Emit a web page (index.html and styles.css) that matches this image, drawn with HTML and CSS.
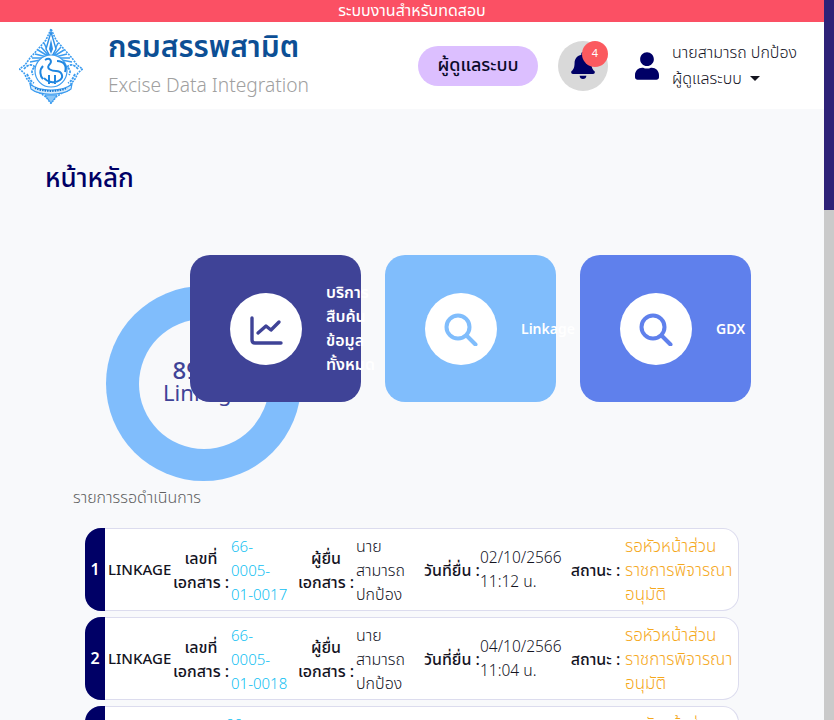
FILE: index.html
```html
<!DOCTYPE html>
<html lang="en">
<head>
    <meta charset="UTF-8">
    <meta name="viewport" content="width=device-width, initial-scale=1.0">
    <title>Excise Data Integration</title>
    <link rel="stylesheet" href="styles.css">
</head>
<body>

    <div class="page">
        <div class="test-banner">ระบบงานสำหรับทดสอบ</div>

        <header class="topbar">
            <div class="brand">
                <svg class="logo" viewBox="0 0 64 76" fill="none" stroke="#3b9cf0" stroke-width="1">
                    <path d="M32 1L27 12L20 20L11 30L6 37L0.5 41L5 45L8 51L13 57L14 62L21 65L27 69L32 75.5L37 69L43 65L50 62L51 57L56 51L59 45L63.5 41L58 37L53 30L44 20L37 12Z" stroke-dasharray="2 1" stroke-width="1.6"/>
                    <path d="M32 30L25 15M32 30L22 19M32 30L19 22M32 30L16 26M32 30L13 30M32 30L11 34M32 30L39 15M32 30L42 19M32 30L45 22M32 30L48 26M32 30L51 30M32 30L53 34" stroke-width="1.5"/>
                    <path d="M32 4L27 21L32 30L37 21Z" fill="#fff" stroke="#2f8fe6" stroke-width="1.4"/>
                    <path d="M32 11L30 21L32 26L34 21Z" fill="#2f8fe6" stroke="none"/>
                    <path d="M5 41C9 36 13 36 16 39C13 41 12 44 14 47M59 41C55 36 51 36 48 39C51 41 52 44 50 47M8 46C10 50 11 53 15 55M56 46C54 50 53 53 49 55" stroke-width="1.8" stroke-dasharray="2.5 1"/>
                    <circle cx="32" cy="43" r="16" fill="#fff" stroke-width="1.2"/>
                    <path d="M26 32C31 29 34 33 30 37C27 41 33 43 37 43C43 43 45 49 41 52C36 56 28 54 25 50M38 33C45 33 48 38 46 44M24 38C20 42 21 48 24 51M30 47V56M36 47V56" stroke="#1f86e0" stroke-width="2"/>
                    <path d="M11 56C20 64 44 64 53 56L52 61C43 68 21 68 12 61Z" fill="#d8ecfc" stroke-width="1.2"/>
                    <path d="M16 60C24 64 40 64 48 60" stroke="#1678d2" stroke-width="1.8" stroke-dasharray="1.5 1"/>
                    <path d="M26 67H38L32 75Z" fill="#8cc6f6" stroke-width="1"/>
                </svg>
                <div class="brand-text">
                    <div class="brand-name">กรมสรรพสามิต</div>
                    <div class="brand-sub">Excise Data Integration</div>
                </div>
            </div>
            <div class="topbar-right">
                <div class="role-pill">ผู้ดูแลระบบ</div>
                <div class="bell">
                    <svg class="bell-icon" viewBox="0 0 448 512"><path d="M224 512c35.32 0 63.97-28.65 63.97-64H160.03c0 35.35 28.65 64 63.97 64zm215.39-149.71c-19.32-20.76-55.47-51.99-55.47-154.29 0-77.7-54.48-139.9-127.94-155.16V32c0-17.67-14.32-32-31.98-32s-31.98 14.33-31.98 32v20.84C118.56 68.1 64.08 130.3 64.08 208c0 102.3-36.15 133.53-55.47 154.29-6 6.45-8.66 14.16-8.61 21.71.11 16.4 12.98 32 32.1 32h383.8c19.12 0 32-15.6 32.1-32 .05-7.55-2.61-15.27-8.61-21.71z"/></svg>
                    <span class="bell-count">4</span>
                </div>
                <div class="user">
                    <svg class="user-icon" viewBox="0 0 448 512"><path d="M224 256c70.7 0 128-57.3 128-128S294.7 0 224 0 96 57.3 96 128s57.3 128 128 128zm89.6 32h-16.7c-22.2 10.2-46.9 16-72.9 16s-50.6-5.8-72.9-16h-16.7C60.2 288 0 348.2 0 422.4V464c0 26.5 21.5 48 48 48h352c26.5 0 48-21.5 48-48v-41.6c0-74.2-60.2-134.4-134.4-134.4z"/></svg>
                    <div class="user-text">
                        <div>นายสามารถ ปกป้อง</div>
                        <div>ผู้ดูแลระบบ <span class="caret"></span></div>
                    </div>
                </div>
            </div>
        </header>

        <main class="content">
            <h1 class="page-title">หน้าหลัก</h1>

            <div class="overview">
                <div class="donut-block">
                    <div class="donut">
                        <div class="donut-hole">
                            <span class="donut-value">89 %</span>
                            <span>Linkage</span>
                        </div>
                    </div>
                    <div class="donut-caption">รายการรอดำเนินการ</div>
                </div>

                <div class="cards">
                    <div class="card card-all">
                        <div class="card-circle">
                            <svg class="card-icon" viewBox="0 0 34 34" fill="none" stroke="#3f4397" stroke-width="3.4" stroke-linecap="round" stroke-linejoin="round">
                                <path d="M3 6V28C3 30 4 31 6 31H32"/>
                                <path d="M9 21L17 14L22 18L30 10"/>
                            </svg>
                        </div>
                        <div class="card-label">บริการ<br>สืบค้น<br>ข้อมูล<br>ทั้งหมด</div>
                    </div>
                    <div class="card card-linkage">
                        <div class="card-circle">
                            <svg class="card-icon" viewBox="0 0 34 34" fill="none" stroke="#80bdfc" stroke-width="4" stroke-linecap="round">
                                <circle cx="14" cy="15" r="11.5"/>
                                <path d="M23 24L31.5 32.5"/>
                            </svg>
                        </div>
                        <div class="card-label card-label-en">Linkage</div>
                    </div>
                    <div class="card card-gdx">
                        <div class="card-circle">
                            <svg class="card-icon" viewBox="0 0 34 34" fill="none" stroke="#5f80ec" stroke-width="4" stroke-linecap="round">
                                <circle cx="14" cy="15" r="11.5"/>
                                <path d="M23 24L31.5 32.5"/>
                            </svg>
                        </div>
                        <div class="card-label card-label-en">GDX</div>
                    </div>
                </div>
            </div>

            <div class="task-list">
                <div class="task">
                    <div class="task-no">1</div>
                    <div class="task-type">LINKAGE</div>
                    <div class="task-key task-key-doc">เลขที่<br>เอกสาร :</div>
                    <div class="task-val task-val-doc link">66-<br>0005-<br>01-0017</div>
                    <div class="task-key task-key-by">ผู้ยื่น<br>เอกสาร :</div>
                    <div class="task-val task-val-by">นาย<br>สามารถ<br>ปกป้อง</div>
                    <div class="task-key task-key-date">วันที่ยื่น :</div>
                    <div class="task-val task-val-date">02/10/2566<br>11:12 น.</div>
                    <div class="task-key task-key-status">สถานะ :</div>
                    <div class="task-val task-val-status">รอหัวหน้าส่วน<br>ราชการพิจารณา<br>อนุมัติ</div>
                </div>
                <div class="task">
                    <div class="task-no">2</div>
                    <div class="task-type">LINKAGE</div>
                    <div class="task-key task-key-doc">เลขที่<br>เอกสาร :</div>
                    <div class="task-val task-val-doc link">66-<br>0005-<br>01-0018</div>
                    <div class="task-key task-key-by">ผู้ยื่น<br>เอกสาร :</div>
                    <div class="task-val task-val-by">นาย<br>สามารถ<br>ปกป้อง</div>
                    <div class="task-key task-key-date">วันที่ยื่น :</div>
                    <div class="task-val task-val-date">04/10/2566<br>11:04 น.</div>
                    <div class="task-key task-key-status">สถานะ :</div>
                    <div class="task-val task-val-status">รอหัวหน้าส่วน<br>ราชการพิจารณา<br>อนุมัติ</div>
                </div>
                <div class="task task-wide-doc">
                    <div class="task-no">3</div>
                    <div class="task-type">LINKAGE</div>
                    <div class="task-key task-key-doc">เลขที่<br>เอกสาร :</div>
                    <div class="task-val task-val-doc link">66-<br>0005-<br>01-0019</div>
                    <div class="task-key task-key-by">ผู้ยื่น<br>เอกสาร :</div>
                    <div class="task-val task-val-by">นาย<br>สามารถ<br>ปกป้อง</div>
                    <div class="task-key task-key-date">วันที่ยื่น :</div>
                    <div class="task-val task-val-date">04/10/2566<br>11:04 น.</div>
                    <div class="task-key task-key-status">สถานะ :</div>
                    <div class="task-val task-val-status">รอหัวหน้าส่วน<br>ราชการพิจารณา<br>อนุมัติ</div>
                </div>
            </div>
        </main>
    </div>

    <div class="scrollbar"><div class="scrollbar-thumb"></div></div>

</body>
</html>
```

FILE: styles.css
```css
* {
    box-sizing: border-box;
}

html, body {
    height: 720px;
    overflow: hidden;
}

body {
    font-family: "Noto Sans Thai", Inter, "Noto Sans", sans-serif;
    background-color: #f8f9fb;
    color: #14141f;
    margin: 0;
    padding: 0;
    display: flex;
}

.page {
    flex: 1;
    min-width: 0;
    height: 720px;
    overflow: hidden;
}

.scrollbar {
    width: 10px;
    height: 720px;
    background-color: #cacaca;
}

.scrollbar-thumb {
    height: 210px;
    background-color: #2e2278;
}

.test-banner {
    height: 22px;
    line-height: 22px;
    background-color: #fb5064;
    color: #fff;
    font-size: 16px;
    text-align: center;
}

.topbar {
    height: 87px;
    background-color: #fff;
    display: flex;
    align-items: center;
    justify-content: space-between;
    padding: 0 25px 0 19px;
}

.brand {
    display: flex;
    align-items: center;
    gap: 25px;
}

.logo {
    width: 64px;
    height: 76px;
}

.brand-text {
    padding-bottom: 2px;
}

.brand-name {
    font-size: 30px;
    font-weight: 600;
    line-height: 44px;
    color: #0c4f95;
}

.brand-sub {
    font-size: 19.2px;
    font-weight: 300;
    line-height: 34px;
    color: #a0a0a0;
}

.topbar-right {
    display: flex;
    align-items: center;
}

.role-pill {
    width: 120px;
    height: 40px;
    line-height: 40px;
    text-align: center;
    border-radius: 20px;
    background-color: #dcbfff;
    font-size: 18px;
    font-weight: 500;
    color: #0a0a2a;
}

.bell {
    position: relative;
    width: 50px;
    height: 50px;
    margin-left: 20px;
    border-radius: 50%;
    background-color: #d9d9d9;
    display: flex;
    align-items: center;
    justify-content: center;
}

.bell-icon {
    width: 24px;
    height: 27px;
    fill: #000066;
}

.bell-count {
    position: absolute;
    top: 0;
    right: 0;
    width: 26px;
    height: 26px;
    line-height: 26px;
    border-radius: 50%;
    background-color: #fb5a5f;
    color: #fff;
    font-size: 11px;
    text-align: center;
}

.user {
    display: flex;
    align-items: center;
    gap: 13px;
    margin-left: 27px;
}

.user-icon {
    width: 24px;
    height: 28px;
    fill: #000066;
}

.user-text {
    width: 127px;
    font-size: 16px;
    font-weight: 300;
    line-height: 26px;
    color: #14141f;
    white-space: nowrap;
}

.caret {
    display: inline-block;
    width: 0;
    height: 0;
    margin-left: 4px;
    vertical-align: 3px;
    border-top: 5px solid #14141f;
    border-left: 5px solid transparent;
    border-right: 5px solid transparent;
}

.content {
    padding: 51px 0 0 45px;
}

.page-title {
    margin: 0;
    font-size: 26px;
    line-height: 38px;
    font-weight: 500;
    color: #000066;
}

.overview {
    display: grid;
    margin-top: 57px;
}

.donut-block,
.cards {
    grid-area: 1 / 1;
}

.donut-block {
    padding-top: 31px;
}

.donut {
    width: 195px;
    height: 195px;
    margin-left: 61px;
    border-radius: 50%;
    background-color: #80bdfc;
    display: flex;
    align-items: center;
    justify-content: center;
}

.donut-hole {
    width: 130px;
    height: 130px;
    border-radius: 50%;
    background-color: #f8f9fb;
    color: #3f4397;
    font-size: 22px;
    line-height: 22px;
    display: flex;
    flex-direction: column;
    align-items: center;
    justify-content: center;
}

.donut-value {
    padding: 0 8px 1px 0;
    font-size: 24px;
    font-weight: 500;
}

.donut-caption {
    margin: 5px 0 0 28px;
    font-size: 16px;
    font-weight: 300;
    line-height: 24px;
    color: #5f5f5f;
}

.cards {
    display: flex;
    gap: 24px;
    padding-left: 145px;
    align-self: start;
}

.card {
    width: 171px;
    height: 147px;
    border-radius: 20px;
    display: flex;
    align-items: center;
    padding-left: 40px;
    gap: 24px;
}

.card-all {
    background-color: #3f4397;
}

.card-linkage {
    background-color: #80bdfc;
}

.card-gdx {
    background-color: #5f80ec;
}

.card-circle {
    flex: none;
    width: 72px;
    height: 72px;
    border-radius: 50%;
    background-color: #fff;
    display: flex;
    align-items: center;
    justify-content: center;
}

.card-icon {
    width: 34px;
    height: 34px;
}

.card-label {
    flex: none;
    width: 40px;
    color: #fff;
    font-size: 16px;
    font-weight: 600;
    line-height: 24px;
    white-space: nowrap;
}

.card-label-en {
    font-family: "Noto Sans", sans-serif;
    font-size: 14px;
}

.task-list {
    display: flex;
    flex-direction: column;
    gap: 6px;
    width: 654px;
    margin: 18px 0 0 40px;
}

.task {
    flex: none;
    height: 83px;
    background-color: #fff;
    box-shadow: inset 0 0 0 1px #dcdcee;
    border-radius: 16px;
    overflow: hidden;
    display: flex;
    align-items: center;
    font-size: 16px;
    line-height: 24px;
}

.task-no {
    flex: none;
    align-self: stretch;
    width: 20px;
    background-color: #000066;
    color: #fff;
    font-weight: 600;
    display: flex;
    align-items: center;
    justify-content: center;
}

.task-type {
    flex: none;
    width: 65px;
    margin-left: 3px;
    padding-top: 2px;
    font-size: 15px;
    font-weight: 500;
}

.task-key {
    flex: none;
    padding-top: 2px;
    font-weight: 500;
    text-align: center;
    white-space: nowrap;
}

.task-val {
    flex: none;
    padding-top: 2px;
    font-weight: 300;
    white-space: nowrap;
}

.task-key-doc { width: 56px; }
.task-val-doc { width: 67px; margin-left: 2px; padding-top: 4px; font-size: 15px; }
.task-key-by { width: 56px; }
.task-val-by { width: 68px; margin-left: 2px; }
.task-key-date { width: 54px; }
.task-val-date { width: 90px; margin-left: 2px; font-size: 15.5px; }
.task-key-status { width: 51px; }
.task-val-status { margin-left: 4px; }

.task-wide-doc .task-val-doc {
    width: 73px;
    margin-left: -4px;
}

.link {
    color: #0fc0f2;
}

.task-val-status {
    color: #f5a81c;
    font-size: 17px;
}
```
